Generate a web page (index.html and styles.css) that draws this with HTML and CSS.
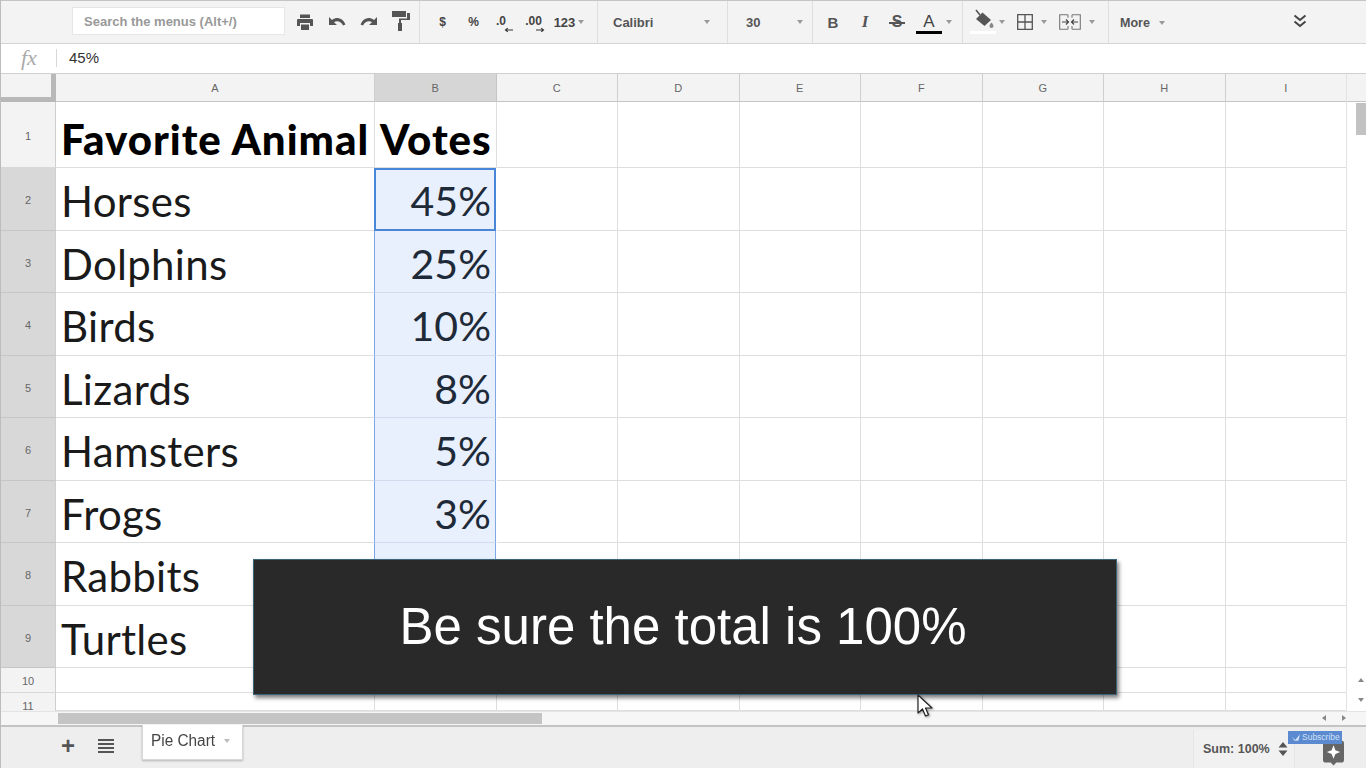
FILE: index.html
```html
<!DOCTYPE html>
<html lang="en">
<head>
<meta charset="utf-8">
<title>Pie Chart</title>
<link rel="stylesheet" href="styles.css">
</head>
<body>
<div class="app">
  <div class="toolbar">
    <div class="search">Search the menus (Alt+/)</div>
    <div class="group g-file">
      <svg class="ic" viewBox="0 0 18 18"><path d="M4 1.500h10V5H4zM2 6h14a1 1 0 0 1 1 1v6h-3v-3H4v3H1V7a1 1 0 0 1 1-1zM5 11.500h8V17H5z" fill="#555"/></svg>
      <svg class="ic" viewBox="0 0 18 18"><path d="M1 4v8h8L6 9.200C9 7.400 12.800 8.300 15 12.500l2.500-1C14.500 4.700 9 3.600 4 6.900z" fill="#555"/></svg>
      <svg class="ic" viewBox="0 0 18 18"><path d="M17 4v8H9l3-2.800C9 7.400 5.200 8.300 3 12.500l-2.500-1C3.500 4.700 9 3.600 14 6.900z" fill="#555"/></svg>
      <svg class="ic roller" viewBox="0 0 18 20"><path d="M0 0h14v6H0zM15 2h3v7H9v3H7V7.500h8z" fill="#555"/><path d="M6 12h4v8H6z" fill="#555"/></svg>
    </div>
    <div class="group g-num">
      <span class="sym">$</span>
      <span class="sym">%</span>
      <span class="dec">.0<svg viewBox="0 0 12 6"><path d="M12 3H3M5 .5 2 3l3 2.500" fill="none" stroke="#333" stroke-width="1.500"/></svg></span>
      <span class="dec dec-two">.00<svg viewBox="0 0 12 6"><path d="M0 3h9M7 .5 10 3 7 5.500" fill="none" stroke="#333" stroke-width="1.500"/></svg></span>
      <span class="sym wide">123<i class="caret"></i></span>
    </div>
    <div class="group g-font"><span>Calibri</span><i class="caret"></i></div>
    <div class="group g-size"><span>30</span><i class="caret"></i></div>
    <div class="group g-style">
      <span class="fmt bold">B</span>
      <span class="fmt ital">I</span>
      <span class="fmt strike">S</span>
      <span class="fmt color">A</span><i class="caret"></i>
    </div>
    <div class="group g-fill">
      <span class="bucket">
        <svg class="ic" viewBox="0 0 22 20"><path d="M3 1 7 6" stroke="#555" stroke-width="1.600"/><path d="M9.500 3.500 18 11l-6.500 6L3 10z" fill="#555"/><path d="M18.500 13.500c1.300 1.700 2 2.500 2 3.500a2 2 0 0 1-4 0c0-1 .7-1.800 2-3.500z" fill="#888"/></svg>
        <b class="fillbar"></b>
      </span><i class="caret"></i>
      <svg class="ic border-ic" viewBox="0 0 16 16"><path d="M.7.7h14.600v14.600H.7zM8 .7v14.600M.7 8h14.600" fill="none" stroke="#555" stroke-width="1.300"/></svg><i class="caret"></i>
      <svg class="ic merge-ic" viewBox="0 0 22 16"><path d="M9 .7H.7v14.600H9M13 .7h8.300v14.600H13M9 .7v3M9 12v3.300M13 .7v3M13 12v3.300" fill="none" stroke="#777" stroke-width="1.100"/><path d="M3 8h6M7 5.500 9.500 8 7 10.500M19 8h-6M15 5.500 12.500 8l2.500 2.500" fill="none" stroke="#444" stroke-width="1.200"/></svg><i class="caret"></i>
    </div>
    <div class="group g-more"><span>More</span><i class="caret"></i></div>
    <svg class="collapse" viewBox="0 0 14 14"><path d="M1.500 1.500 7 6l5.500-4.500M1.500 7.500 7 12l5.500-4.500" fill="none" stroke="#444" stroke-width="2"/></svg>
  </div>

  <div class="formula">
    <span class="fx">fx</span>
    <span class="formula-sep"></span>
    <span class="formula-val">45%</span>
  </div>

  <div class="sheet-wrap">
    <div class="sheet">
      <div class="h corner"></div>
      <div class="h">A</div><div class="h sel">B</div><div class="h">C</div><div class="h">D</div><div class="h">E</div><div class="h">F</div><div class="h">G</div><div class="h">H</div><div class="h">I</div>

      <div class="r">1</div><div class="c t b">Favorite Animal</div><div class="c t b">Votes</div><div class="c"></div><div class="c"></div><div class="c"></div><div class="c"></div><div class="c"></div><div class="c"></div><div class="c"></div>
      <div class="r sel">2</div><div class="c t">Horses</div><div class="c t n active">45%</div><div class="c"></div><div class="c"></div><div class="c"></div><div class="c"></div><div class="c"></div><div class="c"></div><div class="c"></div>
      <div class="r sel">3</div><div class="c t">Dolphins</div><div class="c t n range">25%</div><div class="c"></div><div class="c"></div><div class="c"></div><div class="c"></div><div class="c"></div><div class="c"></div><div class="c"></div>
      <div class="r sel">4</div><div class="c t">Birds</div><div class="c t n range">10%</div><div class="c"></div><div class="c"></div><div class="c"></div><div class="c"></div><div class="c"></div><div class="c"></div><div class="c"></div>
      <div class="r sel">5</div><div class="c t">Lizards</div><div class="c t n range">8%</div><div class="c"></div><div class="c"></div><div class="c"></div><div class="c"></div><div class="c"></div><div class="c"></div><div class="c"></div>
      <div class="r sel">6</div><div class="c t">Hamsters</div><div class="c t n range">5%</div><div class="c"></div><div class="c"></div><div class="c"></div><div class="c"></div><div class="c"></div><div class="c"></div><div class="c"></div>
      <div class="r sel">7</div><div class="c t">Frogs</div><div class="c t n range">3%</div><div class="c"></div><div class="c"></div><div class="c"></div><div class="c"></div><div class="c"></div><div class="c"></div><div class="c"></div>
      <div class="r sel">8</div><div class="c t">Rabbits</div><div class="c range"></div><div class="c"></div><div class="c"></div><div class="c"></div><div class="c"></div><div class="c"></div><div class="c"></div><div class="c"></div>
      <div class="r sel">9</div><div class="c t">Turtles</div><div class="c range"></div><div class="c"></div><div class="c"></div><div class="c"></div><div class="c"></div><div class="c"></div><div class="c"></div><div class="c"></div>
      <div class="r">10</div><div class="c"></div><div class="c"></div><div class="c"></div><div class="c"></div><div class="c"></div><div class="c"></div><div class="c"></div><div class="c"></div><div class="c"></div>
      <div class="r last">11</div><div class="c"></div><div class="c"></div><div class="c"></div><div class="c"></div><div class="c"></div><div class="c"></div><div class="c"></div><div class="c"></div><div class="c"></div>
    </div>
    <div class="vscroll">
      <div class="vhead"></div>
      <div class="vtrack"><div class="vthumb"></div></div>
      <div class="varrows"><i class="tri up"></i><i class="tri down"></i></div>
    </div>
  </div>

  <div class="hscroll">
    <div class="hthumb"></div>
    <div class="harrows"><i class="tri left"></i><i class="tri right"></i></div>
  </div>

  <div class="tabs">
    <span class="plus">+</span>
    <svg class="list" viewBox="0 0 16 14"><path d="M0 1h16M0 5h16M0 9h16M0 13h16" stroke="#555" stroke-width="1.800"/></svg>
    <div class="tab"><span>Pie Chart</span><i class="caret"></i></div>
    <div class="sum">
      <span>Sum: 100%</span>
      <svg class="updown" viewBox="0 0 10 16"><path d="M5 1l4.500 5.500h-9zM5 15 .5 9.500h9z" fill="#555"/></svg>
    </div>
    <svg class="explore" viewBox="0 0 22 26"><path d="M3 0h16a3 3 0 0 1 3 3v17a3 3 0 0 1-3 3h-5l-3 3-3-3H3a3 3 0 0 1-3-3V3a3 3 0 0 1 3-3z" fill="#666"/><path d="M11 5l2 5 5 2-5 2-2 5-2-5-5-2 5-2z" fill="#fff"/></svg>
    <div class="subscribe"><svg viewBox="0 0 10 8"><path d="M0 3l4 4 6-7-2 8H3z" fill="#cfe0f7"/></svg>Subscribe</div>
  </div>

  <div class="callout">Be sure the total is 100%</div>
  <svg class="cursor" viewBox="0 0 16 24"><path d="M1 1v18l4.500-4 3 7 3-1.300-3-6.700H15z" fill="#fff" stroke="#222" stroke-width="1.200" stroke-linejoin="round"/></svg>
</div>
</body>
</html>
```
FILE: styles.css
```css
* { box-sizing: border-box; }
html, body { margin: 0; height: 100%; overflow: hidden; }
body { font-family: "Liberation Sans", Arial, sans-serif; background: #fff; color: #333; }
i { display: block; }

.app { position: relative; width: 1366px; height: 768px; overflow: hidden; display: flex; flex-direction: column; border-left: 1px solid #bdbdbd; }

/* toolbar */
.toolbar { height: 44px; flex: none; display: flex; align-items: stretch; padding-left: 71px; background: #f3f3f3; border-top: 1px solid #c4c4c4; border-bottom: 1px solid #d4d4d4; font-size: 13px; font-weight: bold; color: #555; }
.search { width: 213px; height: 28px; margin-top: 6px; padding-left: 11px; line-height: 28px; background: #fff; border: 1px solid #e6e6e6; color: #999; font-size: 13px; }
.group { display: flex; align-items: center; border-right: 1px solid #dedede; height: 42px; }
.ic { display: block; flex: none; }
.g-file { width: 135px; padding-left: 11px; gap: 14px; }
.g-file .ic { width: 18px; height: 18px; }
.g-file .roller { width: 18px; height: 20px; margin-top: -2px; }
.g-num { width: 178px; font-size: 12px; color: #444; padding-left: 7px; }
.sym { width: 31px; text-align: center; flex: none; }
.sym.wide { width: 36px; display: flex; align-items: center; gap: 3px; font-size: 13px; justify-content: center; }
.dec { width: 31px; flex: none; position: relative; text-align: center; font-size: 12px; top: -1px; padding-right: 7px; }
.dec svg { position: absolute; left: 15px; top: 13px; width: 9px; height: 6px; }
.dec-two { padding-right: 4px; }
.dec-two svg { left: 16px; }
.g-font { width: 130px; padding-left: 15px; justify-content: space-between; padding-right: 17px; color: #555; }
.g-size { width: 85px; padding-left: 18px; justify-content: space-between; padding-right: 9px; color: #555; }
.g-style { width: 150px; padding-left: 4px; gap: 0; }
.fmt { width: 32px; text-align: center; font-size: 15px; color: #555; flex: none; position: relative; }
.bold { font-weight: bold; }
.ital { font-family: "Liberation Serif", serif; font-style: italic; font-weight: bold; font-size: 17px; }
.strike { font-weight: bold; font-size: 16px; }
.strike::after { content: ""; position: absolute; left: 8px; right: 8px; top: 9px; height: 2px; background: #555; }
.color { font-weight: normal; font-size: 17px; color: #444; border-bottom: 3px solid #000; height: 21px; line-height: 17px; width: 26px; margin: 2px 3px 0; }
.g-style .caret { margin-left: 1px; }
.g-fill { width: 146px; padding-left: 7px; }
.bucket { display: block; width: 26px; position: relative; height: 28px; flex: none; }
.bucket .ic { width: 22px; height: 20px; margin: 1px 0 0 3px; }
.fillbar { display: block; width: 26px; height: 3px; background: #fff; margin-top: 2px; }
.g-fill .caret { margin-left: 3px; }
.border-ic { width: 16px; height: 16px; margin-left: 12px; }
.g-fill .border-ic + .caret { margin-left: 8px; }
.merge-ic { width: 22px; height: 16px; margin-left: 12px; }
.g-fill .merge-ic + .caret { margin-left: 8px; }
.g-more { width: auto; border-right: 0; padding: 1px 0 0 11px; gap: 9px; color: #555; font-size: 12.500px; }
.collapse { width: 14px; height: 14px; margin: 13px 0 0 128px; display: block; }
.caret { width: 0; height: 0; flex: none; border-left: 3.500px solid transparent; border-right: 3.500px solid transparent; border-top: 4px solid #999; }

/* formula bar */
.formula { height: 30px; flex: none; display: flex; align-items: center; background: #fff; border-bottom: 1px solid #d0d0d0; padding-bottom: 2px; }
.fx { width: 55px; padding-left: 20px; font-family: "Liberation Serif", serif; font-style: italic; font-size: 22px; color: #aaa; }
.formula-sep { width: 1px; height: 18px; background: #d8d8d8; }
.formula-val { margin-left: 12px; font-size: 15px; color: #333; }

/* sheet */
.sheet-wrap { flex: none; height: 637px; display: flex; overflow: hidden; }
.sheet { display: grid; grid-template-columns: 55px 319px 121.500px repeat(7, 121.500px); grid-template-rows: 28px 66px 63px 62px 63px 62px 63px 62px 63px 62px 25px 18px; width: 1345px; flex: none; }
.h { background: #f3f3f3; border-right: 1px solid #cfcfcf; border-bottom: 1px solid #c4c4c4; font-size: 11px; color: #666; display: flex; align-items: center; justify-content: center; }
.h.sel { background: #d6d6d6; border-right-color: #c4c4c4; }
.corner { border-right: 5px solid #b8b8b8; border-bottom: 5px solid #b8b8b8; background: #f3f3f3; }
.r { background: #f3f3f3; border-right: 1px solid #cfcfcf; border-bottom: 1px solid #d8d8d8; font-size: 11px; color: #666; display: flex; align-items: center; justify-content: center; padding-top: 2px; }
.r.sel { background: #d8d8d8; border-bottom-color: #c6c6c6; }
.r.last { border-bottom: 0; padding-top: 7px; }
.c { border-right: 1px solid #dedede; border-bottom: 1px solid #dedede; background: #fff; min-width: 0; }
.t { font-family: Lato, "Open Sans", sans-serif; font-size: 42px; line-height: 66px; padding-left: 5px; color: #1a1a1a; white-space: nowrap; letter-spacing: .3px; }
.b { font-weight: 900; color: #000; line-height: 74px; letter-spacing: 1px; }
.n { font-size: 41px; text-align: right; padding: 0 4px 0 0; color: #1f2a38; letter-spacing: 0; }
.active { background: #e8f0fd; border: 2px solid #4a86d8; margin-left: -1px; width: 122px; line-height: 62px; padding-right: 3px; }
.range { background: #e8f0fd; border-left: 1px solid #7ea8e4; border-right: 1px solid #7ea8e4; border-bottom: 1px solid #d0dcee; margin-left: -1px; width: 122px; }

.vscroll { width: 20px; flex: none; display: flex; flex-direction: column; background: #fff; border-left: 1px solid #e2e2e2; }
.vhead { height: 28px; background: #f3f3f3; border-bottom: 1px solid #c4c4c4; }
.vtrack { flex: 1; padding-left: 9px; }
.vthumb { width: 10px; height: 32px; margin-top: 1px; background: #c2c2c2; }
.varrows { height: 44px; display: flex; flex-direction: column; align-items: flex-end; gap: 16px; padding: 11px 2px 0 0; }
.tri { width: 0; height: 0; border: 3px solid transparent; }
.tri.up { border-bottom: 4px solid #888; border-top: 0; }
.tri.down { border-top: 4px solid #888; border-bottom: 0; }
.tri.left { border-right: 4px solid #888; border-left: 0; }
.tri.right { border-left: 4px solid #888; border-right: 0; }

.hscroll { height: 14px; flex: none; display: flex; padding: 1px 0 0 57px; background: #f6f6f6; border-top: 1px solid #e4e4e4; position: relative; }
.hthumb { width: 484px; height: 11px; background: #c4c4c4; }
.harrows { position: absolute; left: 1321px; top: 3px; display: flex; gap: 16px; }

.tabs { flex: 1; position: relative; display: flex; align-items: flex-start; background: #eeeeee; border-top: 2px solid #c4c4c4; }
.plus { width: 40px; margin-left: 47px; margin-top: 1px; text-align: center; font-size: 24px; font-weight: bold; line-height: 36px; color: #555; }
.list { width: 16px; height: 14px; margin: 12px 0 0 10px; display: block; }
.tab { display: flex; align-items: center; gap: 9px; width: 101px; height: 35px; margin: -2px 0 0 28px; padding: 0 8px 3px; background: #fff; border: 1px solid #d8d8d8; border-top: 0; box-shadow: 0 1px 2px rgba(0,0,0,.25); font-size: 16px; color: #444; white-space: nowrap; }
.tab span { transform: scaleX(.96); transform-origin: left center; }
.tab .caret { border-top-color: #bbb; margin-left: -3px; }
.sum { margin-left: auto; margin-right: 71px; margin-top: 3px; width: 102px; height: 38px; display: flex; align-items: center; gap: 8px; padding-left: 9px; background: #f1f1f1; border-left: 1px solid #e6e6e6; border-right: 1px solid #e6e6e6; font-size: 12.500px; font-weight: bold; color: #555; white-space: nowrap; }
.updown { width: 10px; height: 16px; display: block; flex: none; }
.explore { position: absolute; left: 1322px; top: 13px; width: 21px; height: 26px; }
.subscribe { position: absolute; left: 1287px; top: 4px; width: 54px; height: 13px; display: flex; align-items: center; gap: 2px; padding-left: 4px; background: #5c8ad0; color: #cfe0f7; font-size: 8.500px; line-height: 13px; white-space: nowrap; }
.subscribe svg { width: 8px; height: 7px; display: block; }

.callout { position: absolute; left: 252px; top: 559px; width: 864px; height: 136px; padding-right: 4px; background: #292929; border: 1px solid #3b6478; box-shadow: 2px 3px 4px rgba(0,0,0,.5); color: #fff; font-size: 51px; line-height: 134px; text-align: center; white-space: nowrap; }
.cursor { position: absolute; left: 916px; top: 694px; width: 16px; height: 24px; filter: drop-shadow(1px 1px 1px rgba(0,0,0,.4)); }
```
